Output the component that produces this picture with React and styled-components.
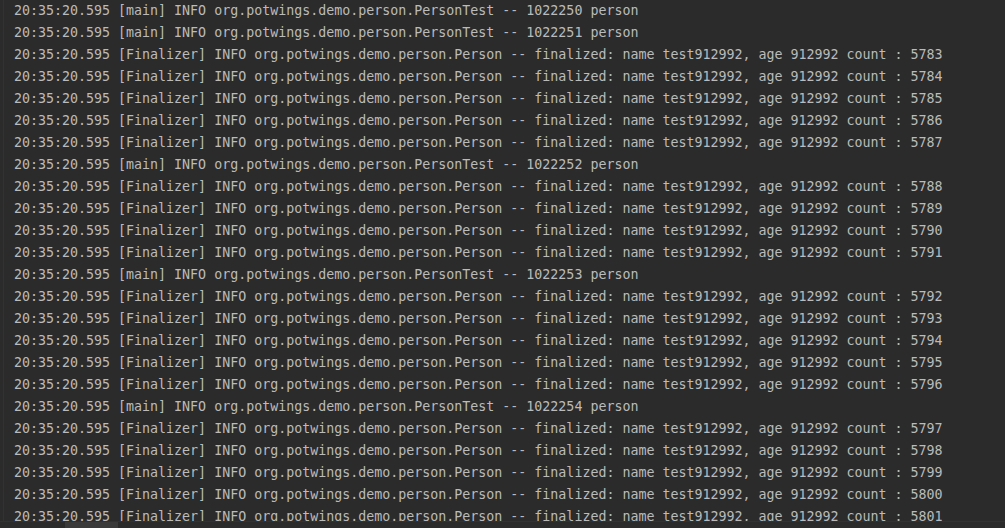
import React from 'react';
import styled, {createGlobalStyle} from 'styled-components';

const GlobalStyle = createGlobalStyle`
  html, body {
    margin: 0;
    padding: 0;
    background: #2b2b2b;
    overflow: hidden;
  }
`

const buildLines = () => {
    const lines = []
    const ts = '20:35:20.595'
    let count = 5783
    let personId = 1022250
    const main = () => lines.push(`${ts} [main] INFO org.potwings.demo.person.PersonTest -- ${personId++} person`)
    const fin = () => lines.push(`${ts} [Finalizer] INFO org.potwings.demo.person.Person -- finalized: name test912992, age 912992 count : ${count++}`)
    main(); main();
    for (let i = 0; i < 5; i++) fin();
    main();
    for (let i = 0; i < 4; i++) fin();
    main();
    for (let i = 0; i < 5; i++) fin();
    main();
    for (let i = 0; i < 5; i++) fin();
    return lines
}

const App = () => {
    const lines = buildLines();
    return (
        <>
            <GlobalStyle/>
            <Window>
                <Console>
                    <Gutter/>
                    <Output>
                        {lines.map((line, index) => (
                            <Line key={index}>{line}</Line>
                        ))}
                    </Output>
                </Console>
                <ScrollBar>
                    <Thumb/>
                </ScrollBar>
            </Window>
        </>
    )
};

const Window = styled.div`
  width: 1005px;
  height: 528px;
  display: flex;
  flex-direction: column;
  background: #2b2b2b;
  overflow: hidden;
`
const Console = styled.div`
  flex: 1;
  display: flex;
  min-height: 0;
  overflow: hidden;
`
const Gutter = styled.div`
  width: 3px;
  flex-shrink: 0;
  background: #2b2b2b;
  border-right: 1px solid #323232;
`
const Output = styled.div`
  flex: 1;
  padding-left: 10px;
  padding-top: 0;
`
const Line = styled.div`
  height: 22px;
  line-height: 22px;
  font-family: "DejaVu Sans Mono", "Liberation Mono", monospace;
  font-size: 13.3px;
  color: #bbbbbb;
  white-space: pre;
`
const ScrollBar = styled.div`
  height: 6px;
  flex-shrink: 0;
  background: #2b2b2b;
  border-top: 1px solid #323232;
  display: flex;
  padding-left: 65px;
`
const Thumb = styled.div`
  width: 53px;
  height: 100%;
  background: #3a3a3a;
`

export default App;
